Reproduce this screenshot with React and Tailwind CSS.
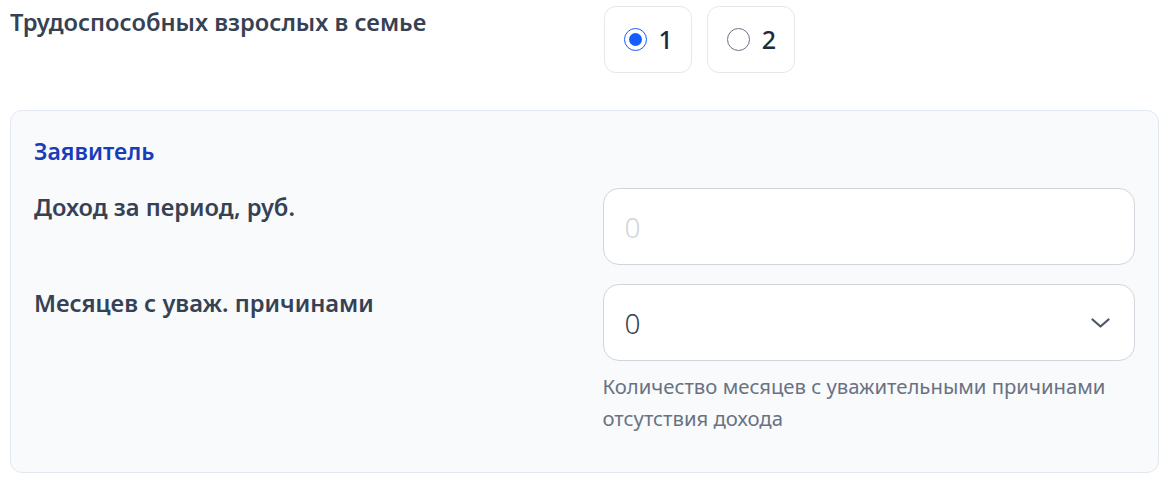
import React from "react";

function Radio({ checked, label }) {
  return (
    <label className="flex h-[67px] items-center gap-[12px] rounded-xl border border-gray-200 bg-white pl-[19px] pr-[18px]">
      <span
        className={
          checked
            ? "flex h-[23px] w-[23px] items-center justify-center rounded-full border border-blue-600 bg-white"
            : "flex h-[23px] w-[23px] items-center justify-center rounded-full border border-gray-500 bg-white"
        }
      >
        {checked && <span className="h-[13px] w-[13px] rounded-full bg-blue-600" />}
      </span>
      <span className="text-[25px] font-medium text-gray-800">{label}</span>
    </label>
  );
}

export default function App() {
  return (
    <div
      className="w-[1169px] bg-white px-[10px] pt-[6px] text-gray-700"
      style={{ fontFamily: '"Noto Sans", "Open Sans", sans-serif' }}
    >
      <div className="grid grid-cols-2 gap-[38px]">
        <div className="text-[23.7px] font-semibold leading-[32px] text-gray-700">
          Трудоспособных взрослых в семье
        </div>
        <div className="flex gap-[15px]">
          <Radio checked label="1" />
          <Radio label="2" />
        </div>
      </div>

      <div className="mt-[37px] rounded-xl border border-slate-200 bg-slate-50 px-[23px] pb-[38px] pt-[24px]">
        <div className="text-[23px] font-semibold leading-[32px] text-blue-800">Заявитель</div>

        <div className="mt-[21px] grid grid-cols-2 gap-x-9 gap-y-[19px]">
          <div className="pt-[3px] text-[23.7px] font-semibold leading-[32px] text-gray-700">
            Доход за период, руб.
          </div>
          <div className="flex h-[77px] items-center rounded-2xl border border-gray-300 bg-white px-[21px]">
            <span className="text-[28px] font-light text-gray-300">0</span>
          </div>

          <div className="pt-[3px] text-[23.7px] font-semibold leading-[32px] text-gray-700">
            Месяцев с уваж. причинами
          </div>
          <div>
            <div className="flex h-[77px] items-center justify-between rounded-2xl border border-gray-300 bg-white pl-[21px] pr-[24px]">
              <span className="text-[28px] font-light text-gray-700">0</span>
              <svg width="19" height="10" viewBox="0 0 19 10" fill="none">
                <path d="M1.5 1.5 L9.5 8.5 L17.5 1.5" stroke="#4b5563" strokeWidth="2.2" strokeLinecap="round" strokeLinejoin="round" />
              </svg>
            </div>
            <p className="mt-[9px] text-[20.3px] leading-[32px] text-gray-500">
              Количество месяцев с уважительными причинами отсутствия дохода
            </p>
          </div>
        </div>
      </div>
      <div className="h-[19px]" />
    </div>
  );
}
